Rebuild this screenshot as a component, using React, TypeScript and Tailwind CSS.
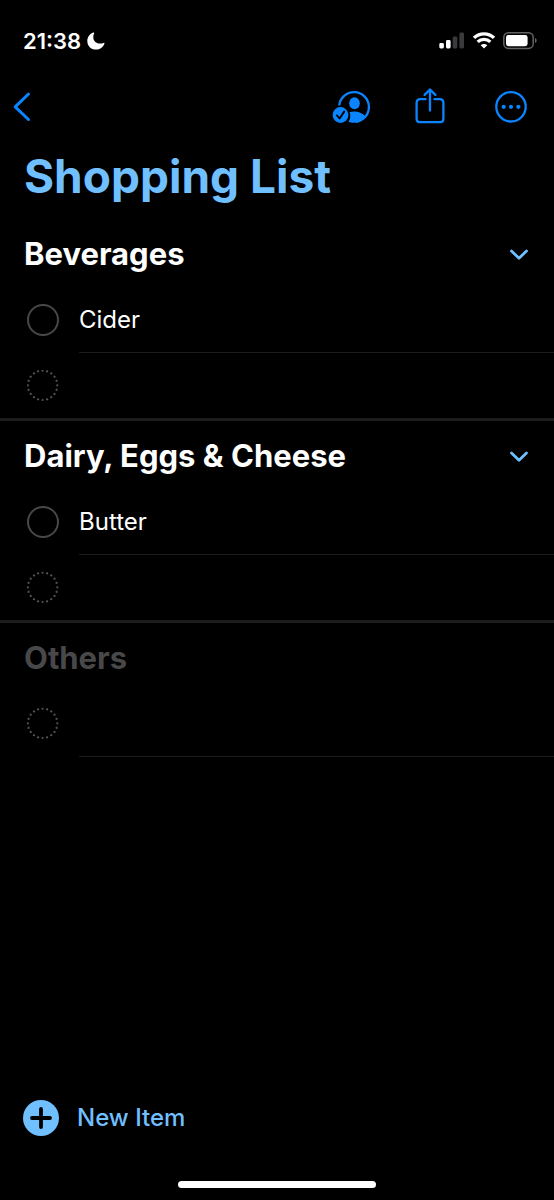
import { useState } from "react";

interface Section {
  name: string;
  items: string[];
}

const sections: Section[] = [
  { name: "Beverages", items: ["Cider"] },
  { name: "Dairy, Eggs & Cheese", items: ["Butter"] },
  { name: "Others", items: [] },
];

function StatusBar() {
  return (
    <div className="flex items-center justify-between pt-[25px] pl-[23px] pr-[17px]">
      <div className="flex items-center gap-1.5">
        <span className="text-[22px] leading-8 font-semibold">21:38</span>
        <svg width="18" height="18" viewBox="0 0 18 18" fill="currentColor">
          <path d="M6.4 0.6C6.9 0.4 7.4 0.9 7.1 1.5C6.5 2.7 6.3 3.8 6.3 5C6.3 9 8.9 11.5 13 11.5C14.3 11.5 15.5 11.3 16.5 10.9C17.2 10.6 17.6 11.1 17.4 11.7C16 15.3 12.9 17.6 9 17.6C3.9 17.6 0.3 13.9 0.3 9C0.3 5.2 2.7 1.9 6.4 0.6Z" />
        </svg>
      </div>
      <div className="flex items-center gap-2">
        <svg width="26" height="18" viewBox="0 0 26 18" fill="currentColor">
          <rect x="0.3" y="11" width="4.6" height="5.5" rx="1.4" />
          <rect x="7" y="8" width="4.6" height="8.5" rx="1.4" />
          <rect x="13.7" y="4.5" width="4.6" height="12" rx="1.4" fill="#3a3a3c" />
          <rect x="20.4" y="0.5" width="4.6" height="16" rx="1.4" fill="#3a3a3c" />
        </svg>
        <svg width="22" height="18" viewBox="0 0 22 18" fill="none" stroke="currentColor" strokeWidth="3.3">
          <path d="M1 5.9C6.6 0.4 15.4 0.4 21 5.9" />
          <path d="M4.7 9.9C8.2 6.5 13.8 6.5 17.3 9.9" />
          <path d="M11 16.6L7.7 13.2C9.5 11.5 12.5 11.5 14.3 13.2Z" fill="currentColor" stroke="none" />
        </svg>
        <svg width="34" height="18" viewBox="0 0 34 18">
          <rect x="0.8" y="0.8" width="29.4" height="15.6" rx="4.6" fill="none" stroke="#636366" strokeWidth="1.5" />
          <rect x="3" y="3" width="21.6" height="11.2" rx="2.4" fill="#fff" />
          <path d="M32 6.1C34.2 7.1 34.2 10.1 32 11.1Z" fill="#636366" />
        </svg>
      </div>
    </div>
  );
}

function Toolbar() {
  return (
    <nav className="flex items-center justify-between pt-[31px] pl-3 pr-[27px] text-[#0a84ff]">
      <button aria-label="Back">
        <svg width="20" height="38" viewBox="0 0 20 38" fill="none" stroke="currentColor" strokeWidth="3" strokeLinecap="round" strokeLinejoin="round">
          <path d="M16.5 6L3.2 18.8L16.5 31.5" />
        </svg>
      </button>
      <div className="flex items-center gap-11">
        <button aria-label="Shared with">
          <svg width="40" height="38" viewBox="0 0 40 38" fill="none">
            <path d="M8.2 17.5A14.9 14.9 0 1 1 25 33.8" stroke="currentColor" strokeWidth="2.3" />
            <ellipse cx="23.5" cy="15.3" rx="5.3" ry="6" fill="currentColor" />
            <path d="M18.5 24.1C24 22.4 31 24 34.4 28.5C31.7 32.5 27.9 34.8 23 34.8C20.8 34.8 19 34.5 17.6 33.8C19.5 30.5 19.9 27.3 18.5 24.1Z" fill="currentColor" />
            <circle cx="9.5" cy="27" r="7.9" fill="currentColor" />
            <path d="M5.9 27.4L8.6 30.5L13.2 23.6" stroke="#000" strokeWidth="1.9" strokeLinecap="round" strokeLinejoin="round" />
          </svg>
        </button>
        <button aria-label="Share">
          <svg width="30" height="38" viewBox="0 0 30 38" fill="none" stroke="currentColor" strokeWidth="2.3" strokeLinecap="round" strokeLinejoin="round">
            <path d="M10.5 11.2H5.4C3 11.2 1.6 12.6 1.6 15V30.4C1.6 32.8 3 34.2 5.4 34.2H24.6C27 34.2 28.4 32.8 28.4 30.4V15C28.4 12.6 27 11.2 24.6 11.2H19.5" />
            <path d="M15 22.5V1.8" />
            <path d="M9.6 6.9L15 1.5L20.4 6.9" />
          </svg>
        </button>
        <button aria-label="More" className="pl-1.5">
          <svg width="32" height="38" viewBox="0 0 32 38" fill="none">
            <circle cx="16" cy="18.8" r="14.7" stroke="currentColor" strokeWidth="2.3" />
            <circle cx="8.7" cy="18.8" r="2.1" fill="currentColor" />
            <circle cx="16" cy="18.8" r="2.1" fill="currentColor" />
            <circle cx="23.3" cy="18.8" r="2.1" fill="currentColor" />
          </svg>
        </button>
      </div>
    </nav>
  );
}

function ItemRow({ name }: { name: string }) {
  return (
    <li className="flex items-center pl-[27px]">
      <label className="flex flex-1 items-center gap-5">
        <input
          type="checkbox"
          className="size-8 shrink-0 appearance-none rounded-full border-2 border-[#48484a] checked:bg-[#70bfff]"
        />
        <span className="flex h-[66px] flex-1 items-center border-b border-[#1c1c1e] text-2xl">{name}</span>
      </label>
    </li>
  );
}

function EmptyRow({ section, underline }: { section: string; underline: boolean }) {
  return (
    <li className="flex items-center gap-5 pl-[27px]">
      <button aria-label={`Add to ${section}`} className="shrink-0">
        <svg width="32" height="32" viewBox="0 0 32 32" fill="none">
          <circle
            cx="15.6"
            cy="15.3"
            r="14.7"
            stroke="#545456"
            strokeWidth="2.2"
            strokeLinecap="round"
            pathLength="200"
            strokeDasharray="0.01 9.99"
          />
        </svg>
      </button>
      <span className={underline ? "h-[66px] flex-1 border-b border-[#1c1c1e]" : "h-[65px] flex-1"} />
    </li>
  );
}

function ListSection({ section }: { section: Section }) {
  const [open, setOpen] = useState(true);
  const empty = section.items.length === 0;

  return (
    <section className="border-b-[3px] border-[#1c1c1e] last:border-b-0">
      <div className="flex h-[68px] items-center justify-between pt-0.5 pl-6 pr-[25px]">
        <h2 className={empty ? "text-[31px] leading-10 font-bold text-[#48484a]" : "text-[31px] leading-10 font-bold"}>
          {section.name}
        </h2>
        {!empty && (
          <button aria-label={`Toggle ${section.name}`} aria-expanded={open} onClick={() => setOpen(!open)}>
            <svg width="20" height="16" viewBox="0 0 20 16" fill="none" stroke="#70bfff" strokeWidth="2.8" strokeLinecap="round" strokeLinejoin="round">
              <path d="M2.5 5L10 12.2L17.5 5" />
            </svg>
          </button>
        )}
      </div>
      {open && (
        <ul>
          {section.items.map((item) => (
            <ItemRow key={item} name={item} />
          ))}
          <EmptyRow section={section.name} underline={empty} />
        </ul>
      )}
    </section>
  );
}

export default function App() {
  return (
    <div className="flex min-h-screen flex-col bg-black font-['Inter',sans-serif] text-white">
      <StatusBar />
      <Toolbar />
      <main className="flex-1">
        <h1 className="pt-5 pb-[13px] pl-6 text-[46px] leading-[60px] font-bold text-[#70bfff]">Shopping List</h1>
        {sections.map((section) => (
          <ListSection key={section.name} section={section} />
        ))}
      </main>
      <footer className="flex flex-col gap-[45px] pb-3">
        <button className="flex items-center gap-[18px] self-start pl-[23px] text-2xl font-medium text-[#70bfff]">
          <svg width="36" height="36" viewBox="0 0 36 36">
            <circle cx="18" cy="18" r="18" fill="currentColor" />
            <path d="M18 9V27M9 18H27" stroke="#000" strokeWidth="3.8" strokeLinecap="round" />
          </svg>
          New Item
        </button>
        <div className="h-[7px] w-[198px] self-center rounded-full bg-white" />
      </footer>
    </div>
  );
}
